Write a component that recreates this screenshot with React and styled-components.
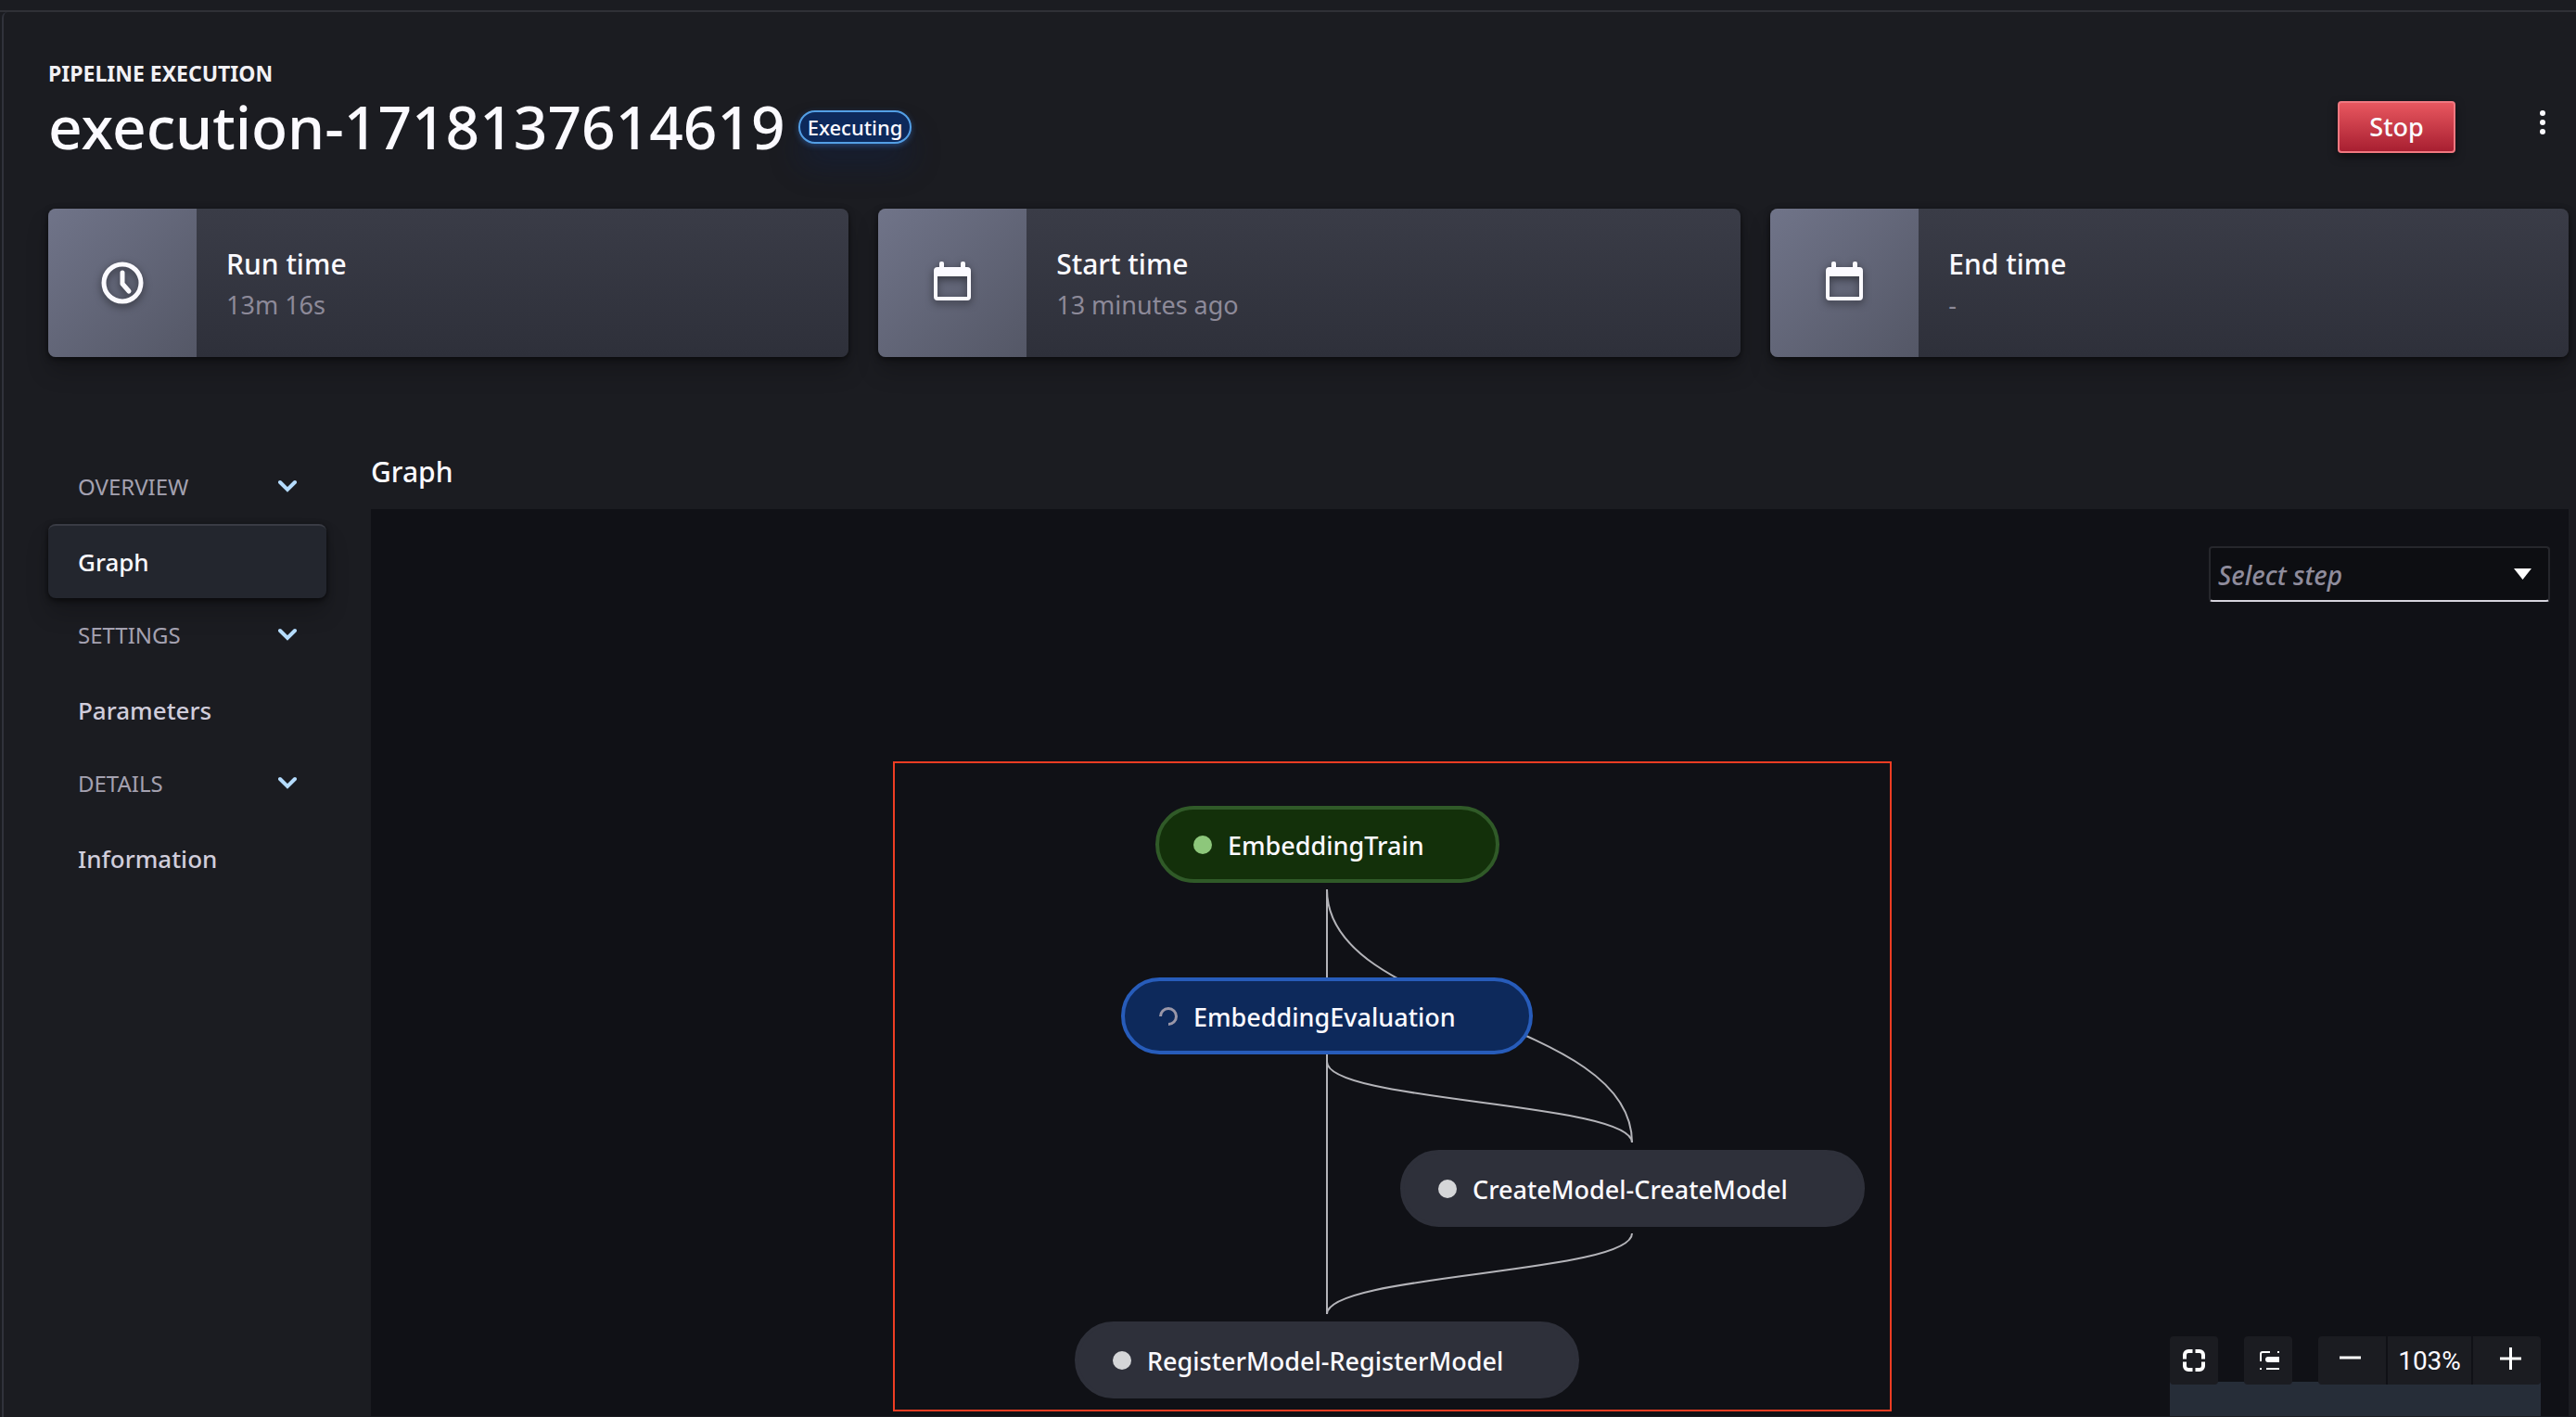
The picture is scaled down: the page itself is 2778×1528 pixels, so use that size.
import React from 'react';
import styled, { createGlobalStyle } from 'styled-components';

const Global = createGlobalStyle`
  *, *::before, *::after { box-sizing: border-box; }
  body {
    margin: 0;
    background: #1b1c21;
    color: #fbfaff;
    font-family: "Noto Sans", "Open Sans", sans-serif;
  }
  button, select { font: inherit; color: inherit; margin: 0; }
  h1, h2, p { margin: 0; }
`;

const Shell = styled.div`
  display: flex;
  flex-direction: column;
  min-height: 100vh;
`;

const TopStrip = styled.div`
  height: 13px;
  border-bottom: 2px solid #2f3036;
  flex: none;
`;

const Page = styled.main`
  flex: 1;
  display: flex;
  flex-direction: column;
  margin: 0 0 0 2px;
  padding: 48px 8px 0 48px;
  border-left: 2px solid #30323b;
  border-top-left-radius: 6px;
`;

const Header = styled.header`
  display: flex;
  justify-content: space-between;
  align-items: flex-start;
`;

const Eyebrow = styled.p`
  font-size: 23px;
  line-height: 36px;
  font-weight: 700;
  color: #f2f1f5;
`;

const TitleRow = styled.div`
  display: flex;
  align-items: center;
  gap: 14px;
`;

const Title = styled.h1`
  font-size: 64px;
  line-height: 80px;
  font-weight: 500;
`;

const StatusBadge = styled.span`
  font-size: 22px;
  line-height: 32px;
  font-weight: 500;
  padding: 0 8px;
  border: 2px solid #539fe5;
  border-radius: 18px;
  background: #0d295b;
  box-shadow: 0 2px 6px rgba(60, 130, 230, 0.4), 0 24px 32px rgba(13, 35, 80, 0.35);
`;

const Actions = styled.div`
  display: flex;
  align-items: flex-start;
  gap: 66px;
  padding-top: 48px;
`;

const StopButton = styled.button`
  width: 127px;
  height: 56px;
  padding: 0 0 2px;
  border: 2px solid #f07880;
  border-radius: 4px;
  background: linear-gradient(#e8575f, #a81f31);
  box-shadow: 0 4px 10px rgba(0, 0, 0, 0.5);
  font-size: 27px;
  font-weight: 500;
`;

const MoreButton = styled.button`
  width: 56px;
  height: 46px;
  padding: 0;
  border: 0;
  background: none;
  display: grid;
  place-items: center;
`;

const Cards = styled.section`
  display: flex;
  gap: 32px;
  padding-top: 48px;
`;

const Card = styled.article`
  flex: 1 1 auto;
  display: flex;
  height: 160px;
  border-radius: 8px;
  overflow: hidden;
  background: linear-gradient(#3a3c47, #2e303a);
  box-shadow: 0 2px 6px rgba(0, 0, 0, 0.6), 0 16px 24px rgba(0, 0, 0, 0.2);
`;

const CardIcon = styled.div`
  width: 160px;
  flex: none;
  display: grid;
  place-items: center;
  background: linear-gradient(135deg, #707489, #545766);

  svg { filter: drop-shadow(0 3px 4px rgba(0, 0, 0, 0.5)); }
`;

const CardText = styled.div`
  padding: 38px 32px 0;
`;

const CardLabel = styled.h2`
  font-size: 30px;
  line-height: 44px;
  font-weight: 500;
`;

const CardValue = styled.p`
  font-size: 27px;
  line-height: 44px;
  color: #8d8a99;
`;

const Body = styled.div`
  flex: 1;
  display: flex;
  gap: 48px;
  padding-top: 100px;
`;

const Sidebar = styled.nav`
  width: 300px;
  flex: none;
`;

const GroupToggle = styled.button`
  width: 100%;
  height: 80px;
  padding: 0 32px 2px;
  border: 0;
  background: none;
  display: flex;
  align-items: center;
  justify-content: space-between;
  font-size: 24px;
  color: #a4a1b0;
`;

const NavLink = styled.a`
  height: 80px;
  padding: 0 32px;
  display: flex;
  align-items: center;
  border-top: 2px solid ${(p) => (p.$active ? '#393b44' : 'transparent')};
  border-radius: 8px;
  background: ${(p) => (p.$active ? '#23262e' : 'none')};
  box-shadow: ${(p) => (p.$active ? '0 2px 6px rgba(0,0,0,.7), 0 16px 24px rgba(0,0,0,.2)' : 'none')};
  color: ${(p) => (p.$active ? '#fbfaff' : '#d0cddb')};
  font-size: 26px;
  font-weight: 500;
  text-decoration: none;
`;

const GraphSection = styled.section`
  flex: 1;
  min-width: 0;
  display: flex;
  flex-direction: column;
  padding-bottom: 1px;
`;

const GraphTitle = styled.h2`
  font-size: 30px;
  line-height: 48px;
  font-weight: 500;
  padding-bottom: 16px;
`;

const Canvas = styled.div`
  flex: 1;
  min-height: 978px;
  position: relative;
  overflow: hidden;
  background: #101116;
`;

const StepBar = styled.div`
  display: flex;
  justify-content: flex-end;
  padding: 40px 20px 0;
`;

const StepPicker = styled.label`
  display: grid;
  width: 368px;
  align-items: center;

  > * { grid-area: 1 / 1; }
  > svg { justify-self: end; margin-right: 20px; pointer-events: none; }
`;

const StepSelect = styled.select`
  appearance: none;
  width: 100%;
  height: 60px;
  padding: 2px 48px 0 8px;
  border: 2px solid #26272c;
  border-bottom-color: #d6d4dd;
  border-radius: 4px;
  background: #0d0e12;
  color: #8f8c9c;
  font-size: 28px;
  font-style: italic;
  font-weight: 500;
`;

const Edges = styled.svg`
  position: absolute;
  left: 0;
  top: 0;
  width: 100%;
  height: 100%;
  pointer-events: none;
`;

const Highlight = styled.div`
  position: absolute;
  left: 563px;
  top: 272px;
  width: 1077px;
  height: 701px;
  border: 2px solid #ee3d23;
  pointer-events: none;
`;

const tones = {
  done: { bg: '#13300a', line: '#305a28' },
  running: { bg: '#0d295b', line: '#275cba' },
  idle: { bg: '#2e303a', line: '#2e303a' },
};

const Node = styled.button`
  position: absolute;
  left: ${(p) => p.$x}px;
  top: ${(p) => p.$y}px;
  width: ${(p) => p.$w}px;
  height: 83px;
  padding: 0 0 0 37px;
  display: flex;
  align-items: center;
  gap: 17px;
  border: 4px solid ${(p) => tones[p.$tone].line};
  border-radius: 42px;
  background: ${(p) => tones[p.$tone].bg};
  font-size: 27px;
  font-weight: 500;
  white-space: nowrap;
`;

const NodeName = styled.span`
  padding-top: 2px;
`;

const Dot = styled.span`
  width: 20px;
  height: 20px;
  border-radius: 50%;
  flex: none;
  background: ${(p) => (p.$tone === 'done' ? '#8dc77b' : '#d5d6d8')};
`;

const Tools = styled.div`
  position: absolute;
  right: 30px;
  bottom: 0;
  width: 400px;
`;

const ToolRow = styled.div`
  position: relative;
  z-index: 1;
  display: flex;
  gap: 28px;
  margin-bottom: -3px;
`;

const ToolButton = styled.button`
  width: 52px;
  height: 52px;
  padding: 0;
  border: 0;
  border-radius: 4px;
  background: #1b1c21;
  display: grid;
  place-items: center;
`;

const ZoomGroup = styled.div`
  flex: 1;
  height: 52px;
  display: flex;
  border-radius: 4px;
  background: #1b1c21;
`;

const ZoomButton = styled.button`
  flex: 1;
  padding: 0 0 4px;
  border: 0;
  background: none;
  display: grid;
  place-items: center;
`;

const ZoomLevel = styled.output`
  width: 94px;
  border: solid #101116;
  border-width: 0 2px;
  text-align: center;
  font-family: Roboto, sans-serif;
  font-size: 28px;
  line-height: 54px;
`;

const MiniMap = styled.div`
  height: 37px;
  background: #262d38;
`;

const ClockIcon = () => (
  <svg width="46" height="46" viewBox="0 0 46 46" fill="none" stroke="#fbfaff" strokeWidth="5" strokeLinecap="round" strokeLinejoin="round">
    <circle cx="23" cy="23" r="20" />
    <path d="M23 12v12l7 8" />
  </svg>
);

const CalendarIcon = () => (
  <svg width="42" height="48" viewBox="0 0 42 48" fill="#fbfaff">
    <path fillRule="evenodd" d="M5 7h32a4 4 0 0 1 4 4v28a4 4 0 0 1-4 4H5a4 4 0 0 1-4-4V11a4 4 0 0 1 4-4zm0 10v22h32V17z" />
    <rect x="7" y="1" width="5" height="10" rx="2" />
    <rect x="30" y="1" width="5" height="10" rx="2" />
  </svg>
);

const MoreIcon = () => (
  <svg width="8" height="28" viewBox="0 0 8 28" fill="#fbfaff">
    <circle cx="4" cy="4" r="3" />
    <circle cx="4" cy="14" r="3" />
    <circle cx="4" cy="24" r="3" />
  </svg>
);

const Chevron = () => (
  <svg width="20" height="14" viewBox="0 0 20 14" fill="none" stroke="#b5dcff" strokeWidth="4" strokeLinecap="round">
    <path d="M2 3l8 8 8-8" />
  </svg>
);

const Caret = () => (
  <svg width="19" height="12" viewBox="0 0 19 12" fill="#fff">
    <path d="M0 0h19L9.500 12z" />
  </svg>
);

const Spinner = () => (
  <svg width="20" height="20" viewBox="0 0 20 20" fill="none" stroke="#9a97a8" strokeWidth="3">
    <path d="M1.500 10A8.500 8.500 0 1 1 10 18.500" />
  </svg>
);

const FitIcon = () => (
  <svg width="24" height="24" viewBox="0 0 24 24" fill="none" stroke="#fff" strokeWidth="4">
    <path d="M2 10.500V6a4 4 0 0 1 4-4h4.500M13.500 2H18a4 4 0 0 1 4 4v4.500M22 13.500V18a4 4 0 0 1-4 4h-4.500M10.500 22H6a4 4 0 0 1-4-4v-4.500" />
  </svg>
);

const MapIcon = () => (
  <svg width="24" height="20" viewBox="0 0 24 20">
    <path d="M4 11V3a2 2 0 0 1 2-2h8" fill="none" stroke="#fff" strokeWidth="2" />
    <path d="M12 6h12v6H12a3 3 0 0 1 0-6z" fill="#fff" />
    <path d="M22 0h2v2h-2zM3 18h2v2H3zM10 18h14v2H10z" fill="#fff" />
  </svg>
);

const MinusIcon = () => (
  <svg width="28" height="24" viewBox="0 0 28 24" fill="none" stroke="#fff" strokeWidth="3">
    <path d="M0 11h23" />
  </svg>
);

const PlusIcon = () => (
  <svg width="30" height="24" viewBox="0 0 30 24" fill="none" stroke="#fff" strokeWidth="3">
    <path d="M7 12h23M18.500 0v24" />
  </svg>
);

const cards = [
  { label: 'Run time', value: '13m 16s', Icon: ClockIcon },
  { label: 'Start time', value: '13 minutes ago', Icon: CalendarIcon },
  { label: 'End time', value: '-', Icon: CalendarIcon },
];

const groups = [
  { name: 'OVERVIEW', link: 'Graph', active: true },
  { name: 'SETTINGS', link: 'Parameters' },
  { name: 'DETAILS', link: 'Information' },
];

const nodes = [
  { name: 'EmbeddingTrain', tone: 'done', x: 846, y: 320, w: 371 },
  { name: 'EmbeddingEvaluation', tone: 'running', x: 809, y: 505, w: 444 },
  { name: 'CreateModel-CreateModel', tone: 'idle', x: 1110, y: 691, w: 501 },
  { name: 'RegisterModel-RegisterModel', tone: 'idle', x: 759, y: 876, w: 544 },
];

const edges = [
  [1031, 410, 1031, 868],
  [1031, 410, 1360, 683],
  [1031, 596, 1360, 683],
  [1360, 781, 1031, 868],
];

const edgePath = ([x1, y1, x2, y2]) => {
  const mid = (y1 + y2) / 2;
  return `M${x1} ${y1}C${x1} ${mid} ${x2} ${mid} ${x2} ${y2}`;
};

export default function App() {
  return (
    <Shell>
      <Global />
      <TopStrip />
      <Page>
        <Header>
          <div>
            <Eyebrow>PIPELINE EXECUTION</Eyebrow>
            <TitleRow>
              <Title>execution-1718137614619</Title>
              <StatusBadge>Executing</StatusBadge>
            </TitleRow>
          </div>
          <Actions>
            <StopButton>Stop</StopButton>
            <MoreButton aria-label="More actions"><MoreIcon /></MoreButton>
          </Actions>
        </Header>
        <Cards>
          {cards.map(({ label, value, Icon }) => (
            <Card key={label}>
              <CardIcon><Icon /></CardIcon>
              <CardText>
                <CardLabel>{label}</CardLabel>
                <CardValue>{value}</CardValue>
              </CardText>
            </Card>
          ))}
        </Cards>
        <Body>
          <Sidebar aria-label="Sections">
            {groups.map((g) => (
              <React.Fragment key={g.name}>
                <GroupToggle aria-expanded="true">{g.name}<Chevron /></GroupToggle>
                <NavLink href={`#${g.link.toLowerCase()}`} $active={g.active}>{g.link}</NavLink>
              </React.Fragment>
            ))}
          </Sidebar>
          <GraphSection>
            <GraphTitle>Graph</GraphTitle>
            <Canvas>
              <Edges>
                {edges.map((e) => (
                  <path key={e.join()} d={edgePath(e)} fill="none" stroke="#b4b4b9" strokeWidth="2" />
                ))}
              </Edges>
              {nodes.map((n) => (
                <Node key={n.name} $tone={n.tone} $x={n.x} $y={n.y} $w={n.w}>
                  {n.tone === 'running' ? <Spinner /> : <Dot $tone={n.tone} />}
                  <NodeName>{n.name}</NodeName>
                </Node>
              ))}
              <Highlight />
              <StepBar>
                <StepPicker>
                  <StepSelect aria-label="Select step" defaultValue="">
                    <option value="">Select step</option>
                    {nodes.map((n) => <option key={n.name}>{n.name}</option>)}
                  </StepSelect>
                  <Caret />
                </StepPicker>
              </StepBar>
              <Tools>
                <ToolRow>
                  <ToolButton aria-label="Fit to screen"><FitIcon /></ToolButton>
                  <ToolButton aria-label="Toggle minimap"><MapIcon /></ToolButton>
                  <ZoomGroup>
                    <ZoomButton aria-label="Zoom out"><MinusIcon /></ZoomButton>
                    <ZoomLevel>103%</ZoomLevel>
                    <ZoomButton aria-label="Zoom in"><PlusIcon /></ZoomButton>
                  </ZoomGroup>
                </ToolRow>
                <MiniMap />
              </Tools>
            </Canvas>
          </GraphSection>
        </Body>
      </Page>
    </Shell>
  );
}
